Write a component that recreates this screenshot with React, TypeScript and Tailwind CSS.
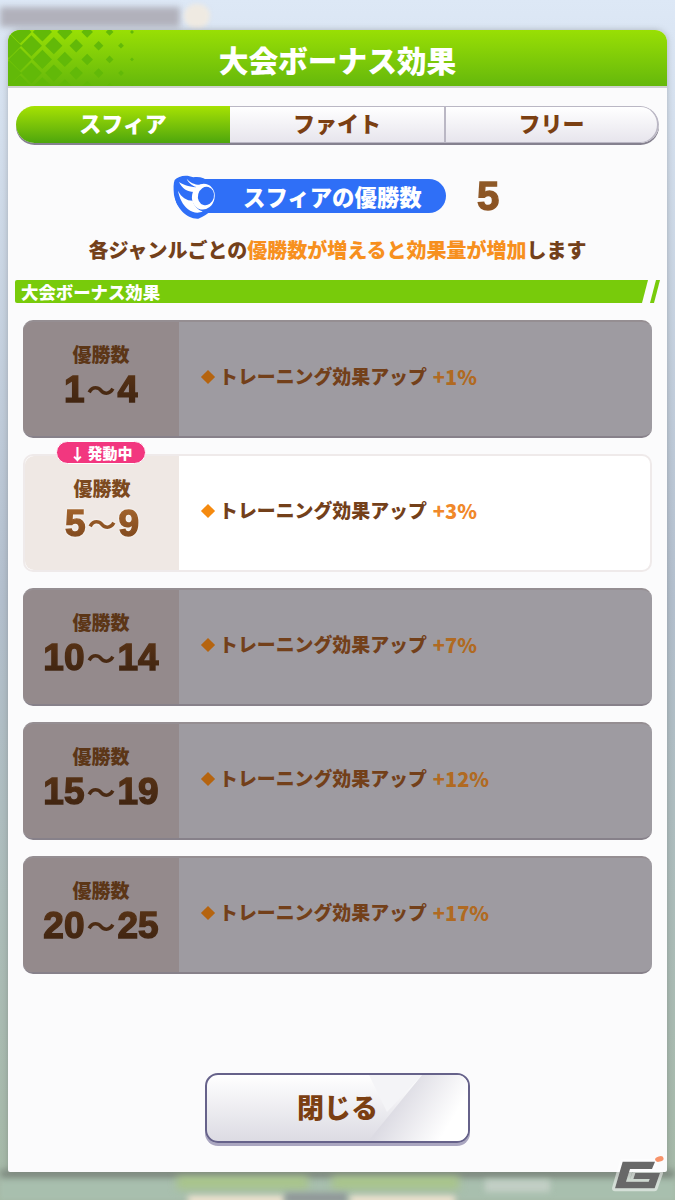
const rows = [
  { range: ['1', '4'], bonus: '+1%', active: false },
  { range: ['5', '9'], bonus: '+3%', active: true },
  { range: ['10', '14'], bonus: '+7%', active: false },
  { range: ['15', '19'], bonus: '+12%', active: false },
  { range: ['20', '25'], bonus: '+17%', active: false },
];

const diamonds: { x: number; y: number; r: number }[] = [];
for (let row = 0; row < 5; row++) {
  for (let col = 0; col < 6; col++) {
    const x = col * 22.4 + (row % 2 === 0 ? 12 : 1);
    const y = row * 13.7 + 2;
    const r = Math.max(1.5, 12.5 - x * 0.085);
    if (x < 128) diamonds.push({ x, y, r });
  }
}

const HeaderPattern = () => (
  <svg className="absolute left-0 top-0" width="140" height="58" viewBox="0 0 140 58">
    {diamonds.map((d) => (
      <polygon
        key={`${d.x}-${d.y}`}
        points={`${d.x},${d.y - d.r} ${d.x + d.r},${d.y} ${d.x},${d.y + d.r} ${d.x - d.r},${d.y}`}
        fill="#62b908"
      />
    ))}
  </svg>
);

const SphereIcon = () => (
  <svg className="absolute left-[-5px] top-[-9px]" width="55" height="50" viewBox="0 0 165 150">
    <path
      d="M14 30 C25 18 48 12 70 22 C100 15 135 40 140 75 C142 110 115 135 85 146 C50 148 20 115 12 75 C10 55 10 40 14 30Z"
      fill="#2f6ff7"
    />
    <path d="M27 36 C36 56 52 66 72 66 L84 52 C66 52 42 46 27 36Z" fill="#ffffff" />
    <path d="M50 26 C60 38 76 46 96 44 L84 52 C70 50 56 40 50 26Z" fill="#ffffff" />
    <path d="M24 62 C34 82 50 92 68 92 C72 108 84 120 98 124 C84 132 68 128 54 118 C38 104 28 84 24 62Z" fill="#ffffff" />
    <ellipse cx="100" cy="80" rx="34" ry="39" transform="rotate(12 100 80)" fill="#ffffff" />
    <ellipse cx="108" cy="78" rx="24" ry="28" transform="rotate(15 108 78)" fill="#2f6ff7" />
  </svg>
);

const Watermark = () => (
  <svg className="absolute bottom-0 right-0" width="75" height="55" viewBox="0 0 225 165">
    <path
      d="M68 50 H165 L156 72 H90 L78 110 H146 L149 102 H100 L106 84 H180 L164 130 H45Z"
      fill="#ffffff"
      fillOpacity="0.5"
      stroke="#ffffff"
      strokeOpacity="0.5"
      strokeWidth="18"
      strokeLinejoin="round"
    />
    <path d="M68 50 H165 L156 72 H90 L78 110 H146 L149 102 H100 L106 84 H180 L164 130 H45Z" fill="#686868" />
    <ellipse cx="178" cy="42" rx="13" ry="8" transform="rotate(-15 178 42)" fill="#f7936a" />
  </svg>
);

const Row = ({ range, bonus, active }: { range: string[]; bonus: string; active: boolean }) => (
  <div
    className={`relative flex h-[118px] rounded-[10px] ${
      active ? 'bg-white border-2 border-[#efeaea]' : 'bg-[#9e9ba1] border-y-2 border-t-[#958e92] border-b-[#87818a]'
    }`}
  >
    {active && (
      <div className="absolute left-[31px] top-[-15px] flex h-[23px] w-[90px] items-center justify-center gap-[2px] rounded-full border border-white bg-[#f2377f] text-[15px] leading-none font-black text-white">
        <span className="text-[16px]">↓</span>
        <span>発動中</span>
      </div>
    )}
    <div
      className={`flex shrink-0 flex-col items-center rounded-l-[9px] ${
        active ? 'w-[154px] bg-[#efe8e4]' : 'w-[156px] bg-[#948a8c]'
      }`}
    >
      <div className={`mt-[20px] text-[19px] leading-[24px] font-black ${active ? 'text-[#7d4a20]' : 'text-[#5c3617]'}`}>
        優勝数
      </div>
      <div
        className={`mt-[3px] bg-gradient-to-b bg-clip-text font-['Liberation_Sans','Noto_Sans_CJK_JP',sans-serif] text-[37px] leading-[40px] font-bold text-transparent [-webkit-text-stroke:1.4px_transparent] ${
          active
            ? 'from-[#a8682f] to-[#7a441b] drop-shadow-[0_0_1px_#ffffff]'
            : 'from-[#5a3416] to-[#3c2210]'
        }`}
      >
        {range[0]}
        <span className="mx-[2px] font-['Noto_Sans_CJK_JP',sans-serif] text-[29px] leading-[40px] font-bold [-webkit-text-stroke:0]">〜</span>
        {range[1]}
      </div>
    </div>
    <div className="flex flex-1 items-center pb-[5px] pl-[24px] text-[18.9px] font-black">
      <span className={`mr-[6px] block h-[10px] w-[10px] rotate-45 ${active ? 'bg-[#f58a0f]' : 'bg-[#b5640f]'}`} />
      <span className="leading-none text-[#73401a]">トレーニング効果アップ</span>
      <span className={`ml-[6px] text-[20px] leading-none ${active ? 'text-[#f0882a]' : 'text-[#b06a22]'}`}>{bonus}</span>
    </div>
  </div>
);

export default function App() {
  return (
    <div className="relative h-[1200px] w-[675px] overflow-hidden bg-gradient-to-b from-[#dde8f6] via-[#b3bfcd] to-[#a5b9a6] pb-[28px] pl-[8px] pr-[8px] pt-[30px] font-['Noto_Sans_CJK_JP',sans-serif] font-black">
      {/* blurred scene behind the dialog */}
      <div className="absolute left-0 top-[7px] h-[20px] w-[180px] bg-[#b1b1bb] blur-[3px]" />
      <div className="absolute left-[184px] top-[4px] h-[24px] w-[26px] rounded-full bg-[#efeae2] blur-[2px]" />
      <div className="absolute bottom-0 left-0 h-[28px] w-[675px] bg-[#a8bfae] blur-[2px]" />
      <div className="absolute left-0 top-[1170px] h-[8px] w-[675px] bg-[#7f8a80] blur-[3px]" />
      <div className="absolute left-[177px] top-[1176px] h-[13px] w-[131px] bg-[#a9c589] blur-[4px]" />
      <div className="absolute left-[332px] top-[1176px] h-[13px] w-[127px] bg-[#a9c589] blur-[4px]" />
      <div className="absolute left-[188px] top-[1196px] h-[8px] w-[97px] bg-[#f6e6d2] blur-[3px]" />
      <div className="absolute left-[285px] top-[1193px] h-[10px] w-[62px] bg-[#8f9698] blur-[3px]" />
      <div className="absolute left-[350px] top-[1196px] h-[8px] w-[105px] bg-[#f6e6d2] blur-[3px]" />
      <div className="absolute left-[485px] top-[1180px] h-[12px] w-[65px] bg-[#c3cfc6] blur-[3px]" />

      <div className="relative flex h-full flex-col rounded-t-[12px] rounded-b-[2px] bg-[#fbfbfc] shadow-[0_0_6px_rgba(90,90,90,0.35)]">
        <div className="relative flex h-[58px] shrink-0 items-center justify-center overflow-hidden rounded-t-[12px] border-b-2 border-[#cfd2cf] bg-gradient-to-b from-[#99df04] to-[#65b80b] pt-[3px]">
          <HeaderPattern />
          <span className="relative text-[29.7px] leading-none text-white">大会ボーナス効果</span>
        </div>

        <div className="mx-[8px] mt-[18px] flex h-[37px] shrink-0 overflow-hidden rounded-full text-[22px] shadow-[0_2px_0_#85818f]">
          <div className="flex w-[214px] items-center justify-center bg-gradient-to-b from-[#a6e202] to-[#4da60c] pb-[5px] text-white">
            スフィア
          </div>
          <div className="flex w-[216px] items-center justify-center border-y border-r-2 border-[#bab7c4] bg-gradient-to-b from-white to-[#e7e5ed] pb-[5px] text-[#7b3f12]">
            ファイト
          </div>
          <div className="flex flex-1 items-center justify-center rounded-r-full border-y border-r-2 border-[#bab7c4] bg-gradient-to-b from-white to-[#e7e5ed] pb-[5px] text-[#7b3f12]">
            フリー
          </div>
        </div>

        <div className="mt-[31px] flex shrink-0 items-center pl-[167px]">
          <div className="relative flex h-[34px] w-[271px] items-center rounded-full bg-[#2f6ff7] pl-[68px] text-[22.4px] leading-none text-white">
            <SphereIcon />
            スフィアの優勝数
          </div>
          <span className="ml-[31px] bg-gradient-to-b from-[#8f5c2a] to-[#8a4f1f] bg-clip-text font-['Liberation_Sans',sans-serif] text-[40px] leading-[44px] font-bold text-transparent [-webkit-text-stroke:1.4px_transparent]">
            5
          </span>
        </div>

        <p className="mt-[17px] shrink-0 text-center text-[20px] leading-[30px] text-[#73401a]">
          各ジャンルごとの<span className="text-[#f7901e]">優勝数が増えると効果量が増加</span>します
        </p>

        <div className="ml-[7px] mt-[15px] flex h-[23px] shrink-0 gap-[2px]">
          <div className="flex w-[633px] items-center rounded-l-[2px] bg-[#78cb0b] pl-[6px] text-[17.4px] leading-none text-white [clip-path:polygon(0_0,100%_0,calc(100%_-_6px)_100%,0_100%)]">
            大会ボーナス効果
          </div>
          <div className="h-full w-[10px] bg-[#78cb0b] [clip-path:polygon(6px_0,100%_0,4px_100%,0_100%)]" />
        </div>

        <div className="mx-[15px] mt-[17px] flex shrink-0 flex-col gap-[16px]">
          {rows.map((row) => (
            <Row key={row.range[0]} {...row} />
          ))}
        </div>

        <div className="mt-[99px] flex shrink-0 justify-center">
          <div className="relative flex h-[70px] w-[265px] items-center justify-center overflow-hidden rounded-[13px] border-2 border-[#66628a] bg-gradient-to-b from-white to-[#dcdbe3] pb-[2px] text-[27px] text-[#7b3f12] shadow-[0_3px_0_#aaa6c0]">
            <svg className="absolute left-0 top-0" width="265" height="70" viewBox="0 0 265 70">
              <defs>
                <linearGradient id="shine" x1="185" y1="32" x2="235" y2="62" gradientUnits="userSpaceOnUse">
                  <stop offset="0" stopColor="#dcdbe3" />
                  <stop offset="1" stopColor="#ffffff" />
                </linearGradient>
              </defs>
              <polygon points="162,0 215,0 180,37" fill="#f4f4f7" />
              <polygon points="215,0 265,0 265,70 158,70" fill="url(#shine)" />
            </svg>
            <span className="relative">閉じる</span>
          </div>
        </div>
      </div>
      <Watermark />
    </div>
  );
}
